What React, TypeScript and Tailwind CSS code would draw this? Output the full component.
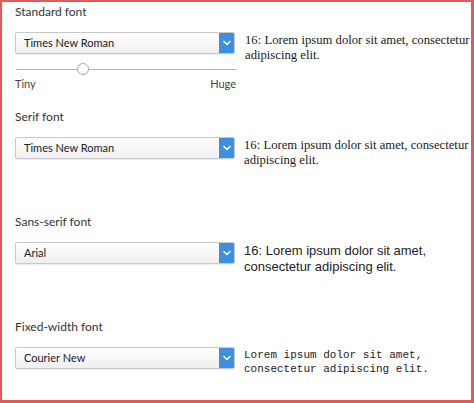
import React from "react";

function Chevron() {
  return (
    <svg width="8" height="6" viewBox="0 0 8 6" fill="none">
      <path d="M1 1.5 L4 4.5 L7 1.5" stroke="white" strokeWidth="1.6" strokeLinecap="round" strokeLinejoin="round" />
    </svg>
  );
}

function Select({ value }: { value: string }) {
  return (
    <div className="flex h-[22px] w-[220px] shrink-0 items-stretch rounded-[2px] border border-[#c9c9c9] bg-gradient-to-b from-white to-[#efefef] shadow-[0_1px_1px_rgba(0,0,0,0.08)]">
      <div className="flex flex-1 items-center pl-[8px] text-[11px] text-[#222]" style={{ fontFamily: "Lato, 'Open Sans', sans-serif" }}>
        {value}
      </div>
      <div className="flex w-[15px] items-center justify-center rounded-r-[1px] bg-[#3d8fe0]">
        <Chevron />
      </div>
    </div>
  );
}

function Section({
  label,
  value,
  children,
  extra,
  last,
}: {
  label: string;
  value: string;
  children: React.ReactNode;
  extra?: React.ReactNode;
  last?: boolean;
}) {
  return (
    <div className={last ? "flex flex-col" : "flex h-[105px] flex-col"}>
      <div className="h-[16px] text-[12px] leading-[16px] text-[#333]">{label}</div>
      <div className="mt-[12px] flex items-start gap-[9px]">
        <div className="flex flex-col">
          <Select value={value} />
          {extra}
        </div>
        <div className="flex-1 pt-[1px]">{children}</div>
      </div>
    </div>
  );
}

function Slider() {
  return (
    <div className="mt-[9px] flex w-[221px] flex-col">
      <div className="relative h-[12px]">
        <div className="absolute left-[1px] right-0 top-[6px] h-[1px] bg-[#b3b3b3]" />
        <div className="absolute left-[62px] top-0 h-[12px] w-[12px] rounded-full border border-[#a8a8a8] bg-white" />
      </div>
      <div className="mt-[2px] flex justify-between text-[11px] leading-[14px] text-[#444]">
        <span>Tiny</span>
        <span>Huge</span>
      </div>
    </div>
  );
}

export default function App() {
  return (
    <div
      className="h-[403px] w-[474px] overflow-hidden border-b-[3px] border-l-2 border-r-[3px] border-t-2 border-[#df5c5c] bg-white pl-[13px] pt-[2px]"
      style={{ fontFamily: "Lato, 'Open Sans', sans-serif" }}
    >
      <Section label="Standard font" value="Times New Roman" extra={<Slider />}>
        <p className="text-[12.7px] leading-[15px] text-[#1a1a1a]" style={{ fontFamily: "'Liberation Serif', 'Times New Roman', serif" }}>
          16: Lorem ipsum dolor sit amet, consectetur adipiscing elit.
        </p>
      </Section>
      <Section label="Serif font" value="Times New Roman">
        <p className="text-[12.7px] leading-[15px] text-[#1a1a1a]" style={{ fontFamily: "'Liberation Serif', 'Times New Roman', serif" }}>
          16: Lorem ipsum dolor sit amet, consectetur adipiscing elit.
        </p>
      </Section>
      <Section label="Sans-serif font" value="Arial">
        <p className="text-[13px] leading-[16px] text-[#222]" style={{ fontFamily: "'Liberation Sans', Arial, sans-serif" }}>
          16: Lorem ipsum dolor sit amet, consectetur adipiscing elit.
        </p>
      </Section>
      <Section label="Fixed-width font" value="Courier New" last>
        <p className="text-[11px] leading-[14px] text-[#222]" style={{ fontFamily: "'Liberation Mono', 'Courier New', monospace" }}>
          Lorem ipsum dolor sit amet, consectetur adipiscing elit.
        </p>
      </Section>
    </div>
  );
}
